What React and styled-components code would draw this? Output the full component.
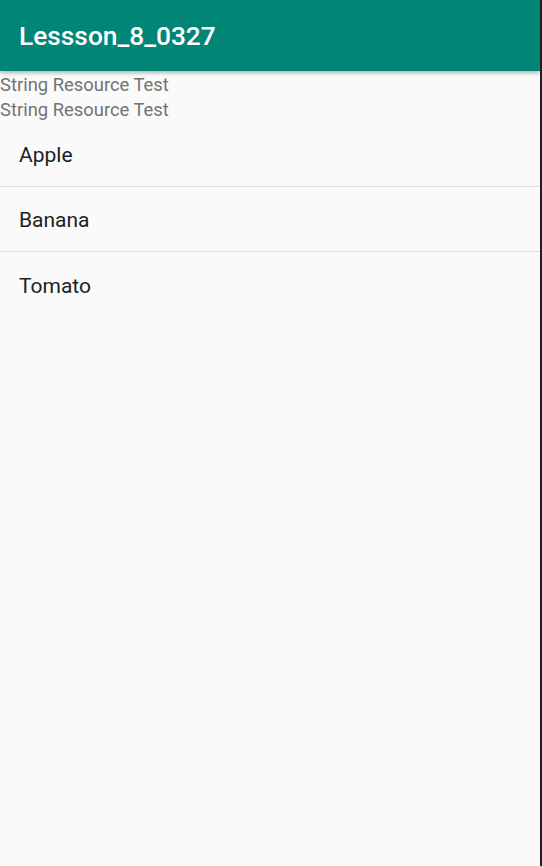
import styled, { createGlobalStyle } from "styled-components";

const GlobalStyle = createGlobalStyle`
    html, body {
        margin: 0;
        padding: 0;
        background-color: #202020;
    }
    body {
        font-family: Roboto, "Noto Sans", sans-serif;
    }
`;

const Screen = styled.div`
    width: 540px;
    height: 866px;
    background-color: #fafafa;
    display: flex;
    flex-direction: column;
    overflow: hidden;
`;

const AppBar = styled.header`
    height: 71px;
    flex-shrink: 0;
    background-color: #008577;
    display: flex;
    align-items: center;
    padding-left: 19px;
    box-shadow: 0 2px 4px rgba(0, 0, 0, 0.28);
    position: relative;
    z-index: 1;
`;

const Title = styled.h1`
    margin: 0;
    color: #ffffff;
    font-size: 26.3px;
    font-weight: 500;
    letter-spacing: 0;
`;

const Label = styled.div`
    color: #737373;
    font-size: 18.4px;
    line-height: 25px;
`;

const Labels = styled.div`
    padding-top: 1px;
`;

const List = styled.ul`
    list-style: none;
    margin: 0;
    padding: 0;
`;

const Item = styled.li`
    box-sizing: border-box;
    height: 65px;
    display: flex;
    align-items: center;
    padding: 2px 0 0 19px;
    color: #212121;
    font-size: 21px;
    border-bottom: ${({ $last }) => ($last ? "none" : "1px solid #dcdcdc")};
`;

const fruits = ["Apple", "Banana", "Tomato"];

const App = () => {
    return (
        <>
            <GlobalStyle />
            <Screen>
                <AppBar>
                    <Title>Lessson_8_0327</Title>
                </AppBar>
                <Labels>
                    <Label>String Resource Test</Label>
                    <Label>String Resource Test</Label>
                </Labels>
                <List>
                    {fruits.map((fruit, i) => (
                        <Item key={fruit} $last={i === fruits.length - 1}>
                            {fruit}
                        </Item>
                    ))}
                </List>
            </Screen>
        </>
    );
};

export default App;
